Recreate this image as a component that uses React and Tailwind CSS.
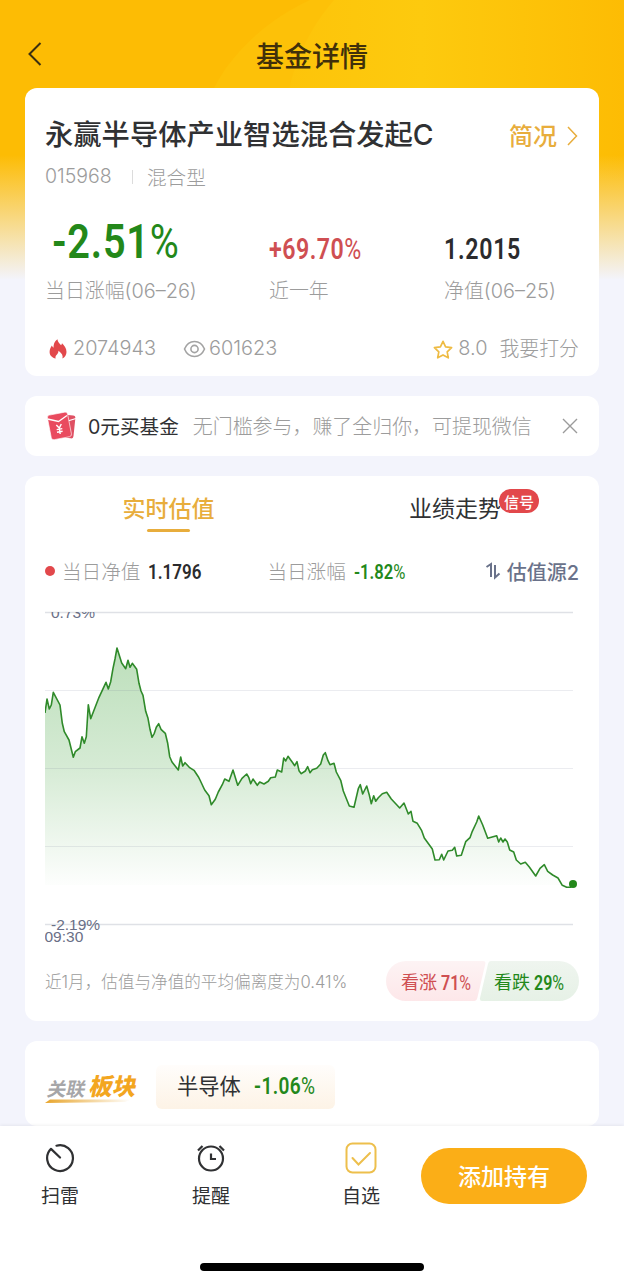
import React from "react";

// Intraday points as [x, y] on the chart canvas
const POINTS = [
  [45, 713], [47, 699], [49.3, 709], [51.3, 705], [53.3, 692.3], [60, 705],
  [62.3, 723.3], [64.3, 731.7], [69, 740], [73.3, 757.3], [75.3, 751.7], [80, 748],
  [82, 736.7], [84.3, 743.3], [86.3, 736.7], [88.3, 704.7], [90.7, 718.7], [99, 697.3],
  [106, 682.3], [108.3, 689], [110.7, 681.7], [113, 668.3], [115, 659], [117, 648],
  [121.7, 663], [125.7, 668.7], [128, 660.3], [130, 667.3], [132.3, 663.3], [136.7, 669.3],
  [139, 683.3], [141, 691], [143, 695.3], [145.7, 711.3], [148, 718.3], [150, 729.3],
  [152, 737.3], [154.3, 733.3], [156.3, 727.3], [158.7, 723.7], [161, 729.3], [165.3, 733.3],
  [167.7, 743.3], [169.7, 756.7], [172, 762], [178.3, 770], [180.7, 757], [182.7, 766],
  [185, 762.7], [189.3, 767.3], [194, 770.3], [198.3, 776.7], [200, 780], [204.7, 790],
  [209, 795.7], [211.3, 804.7], [215.3, 799.3], [218.3, 792], [222.3, 784.7], [224.7, 779],
  [229, 781.3], [233, 770], [237.7, 785.3], [242, 778.3], [246.7, 774], [248.7, 777.3],
  [250.7, 783.7], [253, 779], [257.3, 785.3], [259.7, 782], [264, 784], [268.3, 781.3],
  [270.7, 777.7], [275.3, 777], [277.3, 770], [281.7, 772], [283.7, 758], [285.7, 761],
  [288, 756.3], [292.7, 762.7], [294.7, 765.7], [297, 761.7], [299, 770.7], [301.3, 773.7],
  [305.3, 771], [307.7, 766.7], [310, 772.7], [312.3, 769.7], [316.7, 768.3], [320.7, 764],
  [323.3, 755], [325.3, 752.7], [328, 760.7], [330, 764.7], [334, 763.3], [336.3, 772],
  [340.7, 780.3], [343.3, 791], [349.3, 806], [354, 807.3], [358.3, 788.7], [360.3, 784.7],
  [362.7, 794], [366.7, 786], [369.3, 795], [371.3, 803.7], [373.7, 795.7], [375.7, 801.3],
  [378.3, 797.7], [382.3, 793.7], [386.7, 792.3], [391.3, 799], [399.7, 808], [404, 803],
  [408.3, 814], [411, 811.3], [413, 821.3], [417.3, 823.3], [421.7, 830.7], [424.3, 838],
  [432.3, 849], [435, 860], [439.3, 859.7], [441.7, 854.3], [443.7, 860], [448, 851],
  [452.3, 850.3], [454.7, 847.3], [456.7, 856], [461.3, 855.3], [465.7, 841.7], [470, 837.7],
  [472.3, 831.3], [476.7, 822], [478.7, 816], [482.7, 825], [487.7, 838.3], [496.7, 835.7],
  [498.7, 842], [500.7, 838], [503, 842], [505, 839], [507.3, 842], [509.7, 850],
  [513.7, 852], [516.3, 860], [520.7, 864], [525.3, 862.3], [529.3, 867], [535.7, 876],
  [540, 868.3], [544.3, 864.7], [547.7, 871.3], [552.7, 875], [558, 878], [562.3, 885.3],
  [566.7, 887.3], [570.7, 887.3], [573, 884],
];

const GRID_LINES = [690, 768, 846];

function Num({ className = "", children }) {
  return (
    <span
      className={`inline-block origin-left whitespace-nowrap font-['Roboto',sans-serif] leading-none ${className}`}
    >
      {children}
    </span>
  );
}

function Header() {
  return (
    <header className="relative h-[88px] flex items-center px-6 pt-5">
      <svg width="18" height="26" viewBox="0 0 18 26" fill="none">
        <path d="M16.5 2 5.5 13l11 11" stroke="#3b2f10" strokeWidth="2" />
      </svg>
      <h1 className="flex-1 pt-[5px] text-center text-[28px] leading-none font-medium text-[#41300a] pr-[18px]">
        基金详情
      </h1>
    </header>
  );
}

function Backdrop() {
  return (
    <svg
      className="absolute left-0 top-0"
      width="624"
      height="320"
      viewBox="0 0 624 320"
    >
      <defs>
        <linearGradient id="glow" x1="0" x2="1" y1="0" y2="0">
          <stop offset="0" stopColor="#fdc40a" />
          <stop offset="0.4" stopColor="#fdca0e" />
          <stop offset="1" stopColor="#fdbc04" />
        </linearGradient>
        <linearGradient id="fade" x1="0" x2="0" y1="0" y2="1">
          <stop offset="0" stopColor="#f3f4fc" stopOpacity="0" />
          <stop offset="0.5" stopColor="#f3f4fc" stopOpacity="0.5" />
          <stop offset="1" stopColor="#f3f4fc" />
        </linearGradient>
      </defs>
      <rect width="624" height="320" fill="#fdbc04" />
      <path d="M310 0C262 22 228 58 212 92V180H600V0z" fill="#fdc108" />
      <path d="M334 0C310 28 294 60 287 100V180H624V0z" fill="url(#glow)" />
      <rect y="155" width="624" height="125" fill="url(#fade)" />
      <rect y="279" width="624" height="41" fill="#f3f4fc" />
    </svg>
  );
}

function FundCard() {
  return (
    <section className="h-[288px] rounded-xl bg-white px-5 pt-[26px]">
      <div className="flex h-10 items-center justify-between pt-[3px]">
        <h2 className="text-[28.3px] leading-none font-medium text-[#303133]">
          永赢半导体产业智选混合发起C
        </h2>
        <div className="flex items-center gap-[9px] text-2xl leading-none font-medium text-[#e8ad3c]">
          <span className="pt-[3px]">简况</span>
          <svg width="13" height="20" viewBox="0 0 13 20" fill="none">
            <path d="m2 1 8.500 9L2 19" stroke="#e8ad3c" strokeWidth="1.500" />
          </svg>
        </div>
      </div>
      <div className="mt-2.5 flex h-[26px] items-center text-[19.500px] leading-none font-light text-[#9c9c9c]">
        <span className="w-[87px]">015968</span>
        <span className="h-3.5 w-px bg-[#dcdcdc]" />
        <span className="ml-3.5 pt-[3px] text-[19.600px]">混合型</span>
      </div>

      <div className="mt-6 flex">
        <div className="w-[224px]">
          <div className="flex h-[54px] items-center pl-[7px]">
            <Num className="text-[49px] font-semibold tracking-[0.02em] text-[#23881a] scale-x-[0.81]">
              -2.51<span className="font-normal">%</span>
            </Num>
          </div>
        </div>
        <div className="flex h-[54px] w-[175px] items-center pt-[17px]">
          <Num className="text-[29px] font-semibold tracking-[0.02em] text-[#cf4f52] scale-x-[0.8]">
            +69.70<span className="font-normal">%</span>
          </Num>
        </div>
        <div className="flex h-[54px] items-center pt-[17px]">
          <Num className="text-[29px] font-semibold tracking-[0.03em] text-[#2b2b2d] scale-x-[0.8]">
            1.2015
          </Num>
        </div>
      </div>
      <div className="mt-[11px] flex h-[26px] items-center text-[19.900px] leading-none font-light text-[#9c9c9c]">
        <span className="w-[224px]">当日涨幅(06–26)</span>
        <span className="w-[175px]">近一年</span>
        <span className="whitespace-nowrap">净值(06–25)</span>
      </div>

      <div className="mt-[31px] flex h-[26px] items-center text-[19.900px] leading-none font-light text-[#9c9c9c]">
        <svg width="18" height="20" viewBox="0 0 18 20" className="ml-1">
          <path
            d="M8.400.300c.500 2.900 2.200 4.200 3.700 5.900.500-.500.800-1.200.900-2 2.200 2.200 4.500 5 4.500 8.700 0 3-1.700 5.300-4.100 6.600.900-2.600-.400-5.200-3.900-7.700-.100 2.100-1 3.100-2 4.200-1 1.100-1.300 2.200-.800 3.500C3.300 18.700.600 16.500.600 13c0-3 1.300-4.700 2.300-6.400.400 1.100.900 1.700 1.600 2.100C4.500 5.600 5.300 2.200 8.400.300z"
            fill="#e2484b"
          />
        </svg>
        <span className="ml-1.5 w-[110px]">2074943</span>
        <svg width="23" height="18" viewBox="0 0 22 18" fill="none" stroke="#a3a3a3" strokeWidth="1.600">
          <path d="M1 9c2-4.800 5.700-7.500 10-7.500S19 4.200 21 9c-2 4.800-5.700 7.500-10 7.500S3 13.800 1 9z" />
          <circle cx="11" cy="9" r="3.600" />
        </svg>
        <span className="ml-[3px]">601623</span>
        <div className="ml-auto flex items-center">
          <svg width="20" height="19" viewBox="0 0 20 19" fill="none">
            <path
              d="m10 1.300 2.600 5.500 6 .800-4.400 4.200 1.100 6L10 14.900l-5.300 2.900 1.100-6L1.400 7.600l6-.800z"
              stroke="#eebb43"
              strokeWidth="1.700"
              strokeLinejoin="round"
            />
          </svg>
          <span className="ml-[5px] mr-3">8.0</span>
          <span className="pt-0.5">我要打分</span>
        </div>
      </div>
    </section>
  );
}

function PromoBar() {
  return (
    <section className="mt-5 flex h-[60px] items-center rounded-xl bg-white pl-[21px] pr-5">
      <svg width="32" height="30" viewBox="0 0 32 30" fill="none">
        <rect x="16" y="4" width="12.500" height="23" rx="2.500" fill="#df5063" transform="rotate(6 22 15)" />
        <path d="m20 10.500 10-3" stroke="#fff" strokeWidth="1.200" />
        <rect x="3.200" y="2.500" width="20.500" height="25" rx="2.500" fill="#e94b5f" stroke="#fff" strokeWidth="0.600" transform="rotate(-11 13 15)" />
        <path d="m1.500 8 11 2.500L21 4.500" stroke="#fff" strokeWidth="1.300" />
        <path d="m10.300 14 3 3 2-4M13.300 17l.900 6M10.700 18.600l5.600-1M11 21.200l5.600-1" stroke="#fff" strokeWidth="1.400" />
      </svg>
      <span className="ml-2.5 pt-[3px] text-[19.600px] leading-none text-[#303133]">0元买基金</span>
      <span className="ml-3.5 pt-[3px] text-[19.950px] leading-none font-light whitespace-nowrap text-[#9c9c9c]">
        无门槛参与，赚了全归你，可提现微信
      </span>
      <svg width="16" height="16" viewBox="0 0 16 16" className="ml-auto -translate-x-px">
        <path d="m1 1 14 14M15 1 1 15" stroke="#9b9b9b" strokeWidth="1.400" />
      </svg>
    </section>
  );
}

function ValueChart() {
  const line = POINTS.map((p) => p.join(",")).join(" L");
  return (
    <svg className="-mr-2 shrink-0" width="540" height="340" viewBox="45 606 540 340">
      <defs>
        <linearGradient id="area" gradientUnits="userSpaceOnUse" x1="0" x2="0" y1="648" y2="885">
          <stop offset="0" stopColor="#2f9a2a" stopOpacity="0.320" />
          <stop offset="0.500" stopColor="#2f9a2a" stopOpacity="0.200" />
          <stop offset="1" stopColor="#2f9a2a" stopOpacity="0.010" />
        </linearGradient>
        <clipPath id="plot">
          <rect x="45" y="612" width="540" height="340" />
        </clipPath>
      </defs>
      <path d={`M${line} L573,885 L45,885 Z`} fill="url(#area)" />
      {GRID_LINES.map((y) => (
        <path key={y} d={`M45 ${y}.500H573`} stroke="#64708a" strokeOpacity="0.130" />
      ))}
      <path d="M45 612.500H573M45 924.500H573" stroke="#dfe1e6" strokeWidth="1.500" />
      <path d={`M${line}`} fill="none" stroke="#2f8a2a" strokeWidth="1.600" strokeLinejoin="round" />
      <circle cx="573" cy="884" r="4" fill="#23881a" />
      <g fill="#6a6f86" fontSize="15.500" fontFamily="Liberation Sans, Arial, sans-serif">
        <text x="51" y="617.500" clipPath="url(#plot)">0.73%</text>
        <text x="51" y="929.500">-2.19%</text>
        <text x="44.500" y="942">09:30</text>
      </g>
    </svg>
  );
}

function EstimateCard() {
  return (
    <section className="mt-5 h-[545px] rounded-xl bg-white px-5">
      <div className="flex h-[60px]">
        <div className="flex w-[247px] flex-col items-center pt-[21px] text-[23px] leading-6 font-medium text-[#e8ad3c]">
          实时估值
          <span className="mt-2 h-[3px] w-[43px] rounded-full bg-[#e8ad3c]" />
        </div>
        <div className="relative ml-[117px] pt-[21px] text-[23px] leading-6 text-[#303133]">
          业绩走势
          <span className="absolute left-[90px] top-[13px] flex h-6 w-10 items-center justify-center rounded-full bg-[#e2484b] pt-0.5 text-[15px] leading-none font-medium text-white">
            信号
          </span>
        </div>
      </div>

      <div className="flex h-[70px] items-center text-[19.600px] leading-none font-light text-[#9c9c9c]">
        <span className="size-2.5 rounded-full bg-[#e2484b]" />
        <span className="ml-[7px] pt-[3px]">当日净值</span>
        <div className="ml-2 w-[119px] pt-0.5">
          <Num className="text-[20.500px] font-semibold text-[#2b2b2d] scale-x-[0.83]">1.1796</Num>
        </div>
        <span className="pt-[3px]">当日涨幅</span>
        <div className="ml-2 w-[131px] pt-0.5">
          <Num className="text-[20.500px] font-semibold text-[#23881a] scale-x-[0.810]">
            -1.82<span className="font-normal">%</span>
          </Num>
        </div>
        <svg width="16" height="20" viewBox="0 0 16 20" fill="none" stroke="#6a728a" strokeWidth="2">
          <path d="M1.500 6 6 3v13M10 4v12.500l4.500-4" />
        </svg>
        <span className="ml-auto pt-[3px] text-[20px] font-medium text-[#6a728a]">估值源2</span>
      </div>

      <ValueChart />

      <div className="mt-[15px] flex h-10 items-center justify-between">
        <span className="pt-[3px] text-[16.600px] leading-none font-light whitespace-nowrap text-[#9c9c9c]">
          近1月，估值与净值的平均偏离度为0.41%
        </span>
        <div className="relative flex h-10 w-[193px] items-center">
          <svg className="absolute inset-0" width="193" height="40" viewBox="0 0 193 40">
            <defs>
              <linearGradient id="up" x1="0" x2="0" y1="0" y2="1">
                <stop offset="0" stopColor="#fdf3f4" />
                <stop offset="1" stopColor="#fde7e9" />
              </linearGradient>
              <linearGradient id="down" x1="0" x2="0" y1="0" y2="1">
                <stop offset="0" stopColor="#eff5ef" />
                <stop offset="1" stopColor="#e6f1e6" />
              </linearGradient>
            </defs>
            <path d="M20 0H97q3 0 2.300 3l-8 34q-.700 3-3.300 3H20a20 20 0 0 1 0-40z" fill="url(#up)" />
            <path d="M105 0h68a20 20 0 0 1 0 40H96q-2.500 0-2-3l8-34q.700-3 3-3z" fill="url(#down)" />
          </svg>
          <span className="relative ml-[15px] flex w-[93px] items-center gap-1 pt-[3px] text-[18px] leading-none text-[#cf4f52]">
            看涨
            <Num className="text-[20px] font-semibold scale-x-[0.800]">
              71<span className="font-normal">%</span>
            </Num>
          </span>
          <span className="relative flex items-center gap-1 pt-[3px] text-[18px] leading-none text-[#23881a]">
            看跌
            <Num className="text-[20px] font-semibold scale-x-[0.800]">
              29<span className="font-normal">%</span>
            </Num>
          </span>
        </div>
      </div>
    </section>
  );
}

function SectorCard() {
  return (
    <section className="mt-5 flex h-[85px] items-start rounded-xl bg-white px-5 pt-6">
      <div className="relative mt-2 flex h-[28px] w-[92px] items-center leading-none font-black whitespace-nowrap">
        <svg className="absolute -left-1 bottom-[-3px]" width="96" height="6" viewBox="0 0 96 6">
          <defs>
            <linearGradient id="swoosh" x1="0" x2="1" y1="0" y2="0">
              <stop offset="0" stopColor="#e8a52c" />
              <stop offset="1" stopColor="#e8a52c" stopOpacity="0" />
            </linearGradient>
          </defs>
          <path d="M4 5 9 1.500h81l-6 2.500z" fill="url(#swoosh)" />
        </svg>
        <span className="relative ml-[3px] inline-block -skew-x-12 pt-1 text-[19px] font-bold text-[#a6a6a8]">关联</span>
        <span className="relative ml-1 inline-block -skew-x-12 text-[23.500px] text-[#f3a61f]">板块</span>
      </div>
      <div className="ml-[19px] flex h-[44px] w-[179px] items-center rounded-md bg-linear-to-b from-[#fffdfb] to-[#fdf3e6] pl-[21px]">
        <span className="text-[21.300px] leading-none text-[#303133]">半导体</span>
        <div className="ml-[13px]">
          <Num className="text-[23px] font-semibold tracking-[0.02em] text-[#23881a] scale-x-[0.830]">
            -1.06<span className="font-normal">%</span>
          </Num>
        </div>
      </div>
    </section>
  );
}

function TabItem({ label, className = "", children }) {
  return (
    <div className={`flex w-[60px] flex-col items-center ${className}`}>
      <div className="flex h-8 items-center">{children}</div>
      <span className="mt-[11px] text-[19px] leading-6 text-[#303133]">{label}</span>
    </div>
  );
}

function BottomBar() {
  return (
    <footer className="relative flex h-[154px] flex-col items-center bg-white shadow-[0_-1px_3px_rgba(0,0,0,0.06)]">
      <div className="flex h-[137px] w-full items-start pt-4">
        <TabItem label="扫雷" className="ml-[30px]">
          <svg width="30" height="30" viewBox="0 0 30 30" fill="none" stroke="#303133" strokeWidth="2.200" strokeLinecap="round">
            <path d="M11.500 2.700A12.900 12.900 0 1 1 6 5.900L15 14.500" strokeLinejoin="round" />
          </svg>
        </TabItem>
        <TabItem label="提醒" className="ml-[91px]">
          <svg width="30" height="30" viewBox="0 0 30 30" fill="none" stroke="#303133" strokeWidth="2.200">
            <circle cx="15" cy="15.500" r="12" />
            <path d="M15 10.500V16h5" />
            <path d="M2 7.500 6.500 3M28 7.500 23.500 3" />
          </svg>
        </TabItem>
        <TabItem label="自选" className="ml-[90px]">
          <svg width="32" height="32" viewBox="0 0 32 32" fill="none" stroke="#edbf4c" strokeWidth="2">
            <rect x="1.500" y="1.500" width="29" height="29" rx="6" />
            <path d="m7.500 16 6 6.500L25 11" strokeLinecap="round" />
          </svg>
        </TabItem>
        <button className="ml-[30px] mt-[6px] h-[56px] w-[166px] rounded-full bg-[#fbae17] pt-0.5 text-[23px] leading-none font-medium text-white">
          添加持有
        </button>
      </div>
      <span className="h-2 w-[224px] shrink-0 rounded-full bg-black" />
    </footer>
  );
}

export default function App() {
  return (
    <div className="relative h-[1280px] w-[624px] overflow-hidden bg-[#f3f4fc] font-['Inter','Noto_Sans_CJK_SC',sans-serif]">
      <Backdrop />
      <div className="relative">
        <Header />
        <main className="h-[1038px] overflow-hidden px-[25px]">
          <FundCard />
          <PromoBar />
          <EstimateCard />
          <SectorCard />
        </main>
        <BottomBar />
      </div>
    </div>
  );
}
